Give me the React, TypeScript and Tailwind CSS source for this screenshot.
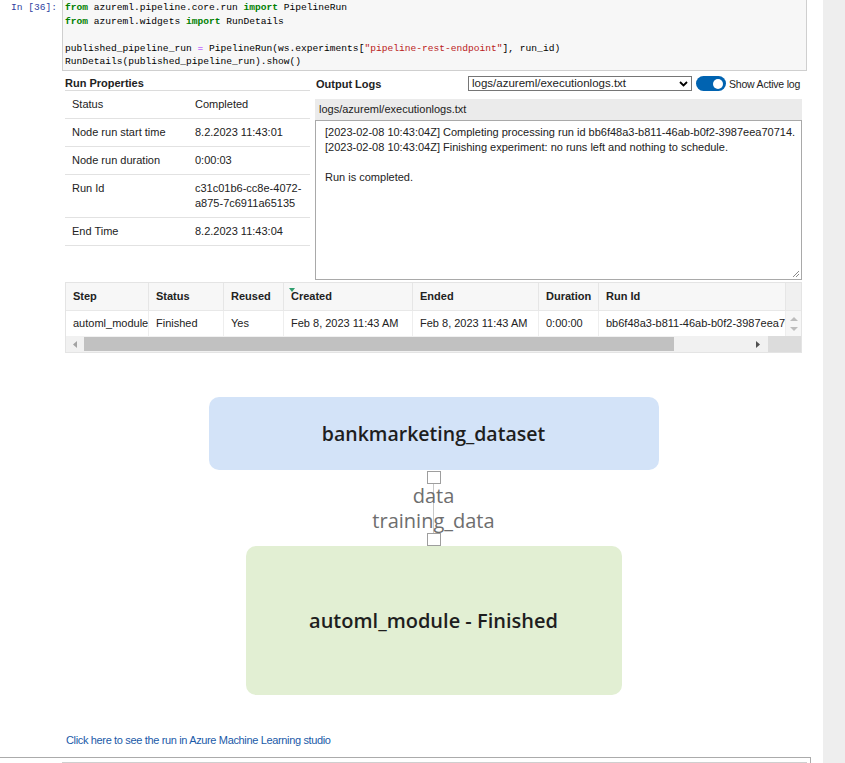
import React from 'react';

const kw = 'text-[#008000] font-bold';
const str = 'text-[#ba2121]';
const op = 'text-[#aa22ff]';

const props: { label: string; value: React.ReactNode; tall?: boolean }[] = [
  { label: 'Status', value: 'Completed' },
  { label: 'Node run start time', value: '8.2.2023 11:43:01' },
  { label: 'Node run duration', value: '0:00:03' },
  {
    label: 'Run Id',
    value: (
      <>
        c31c01b6-cc8e-4072-
        <br />
        a875-7c6911a65135
      </>
    ),
    tall: true,
  },
  { label: 'End Time', value: '8.2.2023 11:43:04' },
];

const cols = [
  { name: 'Step', w: 'w-[83px]', v: 'automl_module' },
  { name: 'Status', w: 'w-[75px]', v: 'Finished' },
  { name: 'Reused', w: 'w-[60px]', v: 'Yes' },
  { name: 'Created', w: 'w-[129px]', v: 'Feb 8, 2023 11:43 AM', sorted: true },
  { name: 'Ended', w: 'w-[126px]', v: 'Feb 8, 2023 11:43 AM' },
  { name: 'Duration', w: 'w-[60px]', v: '0:00:00' },
  { name: 'Run Id', w: 'w-[187px]', v: 'bb6f48a3-b811-46ab-b0f2-3987eea70714' },
];

function CodeCell() {
  return (
    <div className="flex">
      <div className="w-[62px] pr-[5px] pt-[1px] text-right text-[9.6px] leading-[13.5px] text-[#303f9f] font-['Liberation_Mono',monospace]">
        In&nbsp;[36]:
      </div>
      <div className="w-[745px] h-[71px] bg-[#f7f7f7] border border-t-0 border-[#cfcfcf] pl-[2px] pt-[1px] text-[9.6px] leading-[13.5px] text-[#000] font-['Liberation_Mono',monospace] whitespace-pre">
        <div>
          <span className={kw}>from</span> azureml.pipeline.core.run <span className={kw}>import</span> PipelineRun
        </div>
        <div>
          <span className={kw}>from</span> azureml.widgets <span className={kw}>import</span> RunDetails
        </div>
        <div>&nbsp;</div>
        <div>
          published_pipeline_run <span className={op}>=</span> PipelineRun(ws.experiments[
          <span className={str}>"pipeline-rest-endpoint"</span>], run_id)
        </div>
        <div>RunDetails(published_pipeline_run).show()</div>
      </div>
    </div>
  );
}

function RunProperties() {
  return (
    <div className="w-[245px] shrink-0">
      <div className="pt-[4px] h-[19px] border-b border-[#dcdcdc] font-bold leading-[14px]">Run Properties</div>
      {props.map((p) => (
        <div
          key={p.label}
          className={`flex border-b border-[#e2e2e2] ${p.tall ? 'py-[6px]' : 'h-[28px] items-center'}`}
        >
          <div className="w-[130px] pl-[7px] leading-[15px]">{p.label}</div>
          <div className="flex-1 leading-[15px]">{p.value}</div>
        </div>
      ))}
    </div>
  );
}

function OutputLogs() {
  return (
    <div className="w-[487px] shrink-0">
      <div className="flex items-center h-[19px] pt-[4px]">
        <div className="w-[153px] shrink-0 pl-[1px] font-bold leading-[14px]">Output Logs</div>
        <div className="w-[224px] shrink-0 h-[15px] border border-[#767676] flex items-center justify-between pl-[3px] pr-[3px] bg-white text-[11.5px]">
          <span className="leading-[13px]">logs/azureml/executionlogs.txt</span>
          <svg width="9" height="6" viewBox="0 0 9 6">
            <path d="M1 1 L4.5 4.5 L8 1" stroke="#000" strokeWidth="1.8" fill="none" />
          </svg>
        </div>
        <div className="ml-[4px] shrink-0 w-[30px] h-[15px] rounded-full bg-[#0063b1] flex items-center justify-end pr-[3px]">
          <div className="w-[10px] h-[10px] rounded-full bg-white" />
        </div>
        <div className="ml-[3px] shrink-0 text-[10.5px] tracking-[-0.2px] leading-[14px] whitespace-nowrap">Show Active log</div>
      </div>
      <div className="mt-[8px] h-[21px] bg-[#ebebeb] pl-[4px] flex items-center">logs/azureml/executionlogs.txt</div>
      <div className="relative h-[160px] border border-[#a9a9a9] bg-white pl-[9px] pt-[4px] leading-[15px]">
        <div>[2023-02-08 10:43:04Z] Completing processing run id bb6f48a3-b811-46ab-b0f2-3987eea70714.</div>
        <div>[2023-02-08 10:43:04Z] Finishing experiment: no runs left and nothing to schedule.</div>
        <div>&nbsp;</div>
        <div>Run is completed.</div>
        <svg className="absolute right-[1px] bottom-[1px]" width="9" height="9" viewBox="0 0 9 9">
          <path d="M8 2 L2 8 M8 5 L5 8" stroke="#8a8a8a" strokeWidth="1" />
        </svg>
      </div>
    </div>
  );
}

function StepsTable() {
  return (
    <div className="mt-[2px] border border-[#e4e4e4]">
      <div className="flex h-[27px] bg-[#f7f7f7]">
        {cols.map((c) => (
          <div key={c.name} className={`${c.w} relative border-r border-[#e6e6e6] pl-[7px] flex items-center font-bold`}>
            {c.sorted && (
              <svg className="absolute left-[5px] top-[5px]" width="6" height="4" viewBox="0 0 6 4">
                <path d="M0 0 L6 0 L3 4 Z" fill="#2e9e6e" />
              </svg>
            )}
            {c.name}
          </div>
        ))}
        <div className="flex-1 bg-[#f0f0f0]" />
      </div>
      <div className="flex h-[26px] bg-white border-t border-[#e8e8e8]">
        {cols.map((c) => (
          <div key={c.name} className={`${c.w} border-r border-[#eeeeee] pl-[7px] flex items-center overflow-hidden whitespace-nowrap`}>
            {c.v}
          </div>
        ))}
        <div className="flex-1 bg-[#f6f6f6] flex flex-col items-center justify-center gap-[6px]">
          <svg width="8" height="4" viewBox="0 0 8 4"><path d="M0 4 L4 0 L8 4 Z" fill="#bdbdbd" /></svg>
          <svg width="8" height="4" viewBox="0 0 8 4"><path d="M0 0 L8 0 L4 4 Z" fill="#bdbdbd" /></svg>
        </div>
      </div>
      <div className="flex h-[16px] bg-[#f1f1f1]">
        <div className="w-[18px] flex items-center justify-center">
          <svg width="4" height="7" viewBox="0 0 4 7"><path d="M4 0 L0 3.5 L4 7 Z" fill="#a3a3a3" /></svg>
        </div>
        <div className="w-[590px] my-[1px] bg-[#c1c1c1]" />
        <div className="w-[94px] flex items-center justify-end pr-[8px]">
          <svg width="4" height="7" viewBox="0 0 4 7"><path d="M0 0 L4 3.5 L0 7 Z" fill="#505050" /></svg>
        </div>
        <div className="flex-1 bg-[#dcdcdc]" />
      </div>
    </div>
  );
}

function Port() {
  return <div className="w-[14px] h-[13px] border border-[#9e9e9e] bg-white" />;
}

function Graph() {
  return (
    <div className="mt-[44px] flex flex-col items-center font-['Open_Sans',sans-serif]">
      <div className="w-[450px] h-[73px] rounded-[10px] bg-[#d3e3f8] flex items-center justify-center text-[19.5px] font-semibold text-[#1e1e1e]">
        bankmarketing_dataset
      </div>
      <div className="mt-[1px]"><Port /></div>
      <div className="relative h-[49px] flex flex-col items-center text-[20px] leading-[24.5px] text-[#6e6e6e]">
        <div className="absolute left-1/2 top-0 bottom-0 w-px bg-[#c8c8c8]" />
        <div className="relative">data</div>
        <div className="relative">training_data</div>
      </div>
      <Port />
      <div className="w-[376px] h-[149px] rounded-[10px] bg-[#e2efd3] flex items-center justify-center text-[20px] font-semibold text-[#1e1e1e]">
        automl_module - Finished
      </div>
    </div>
  );
}

export default function App() {
  return (
    <div className="flex w-[845px] h-[763px] overflow-hidden bg-white text-[11px] text-[#222] font-['Liberation_Sans',Arial,sans-serif]">
      <div className="w-[823px] shrink-0">
        <CodeCell />
        <div className="ml-[65px] w-[737px]">
          <div className="flex gap-[5px] mt-[1px]">
            <RunProperties />
            <OutputLogs />
          </div>
          <StepsTable />
          <Graph />
          <div className="mt-[38px] pl-[1px] text-[#1a5aa8] tracking-[-0.35px] leading-[14px]">
            Click here to see the run in Azure Machine Learning studio
          </div>
        </div>
        <div className="mt-[10px] w-[811px] h-[20px] border-t border-r border-[#ababab] pt-[4px]">
          <div className="ml-[62px] w-[745px] h-full border-t border-x border-[#cfcfcf] bg-[#f7f7f7]" />
        </div>
      </div>
      <div className="flex-1 bg-[#eeeeee]" />
    </div>
  );
}
